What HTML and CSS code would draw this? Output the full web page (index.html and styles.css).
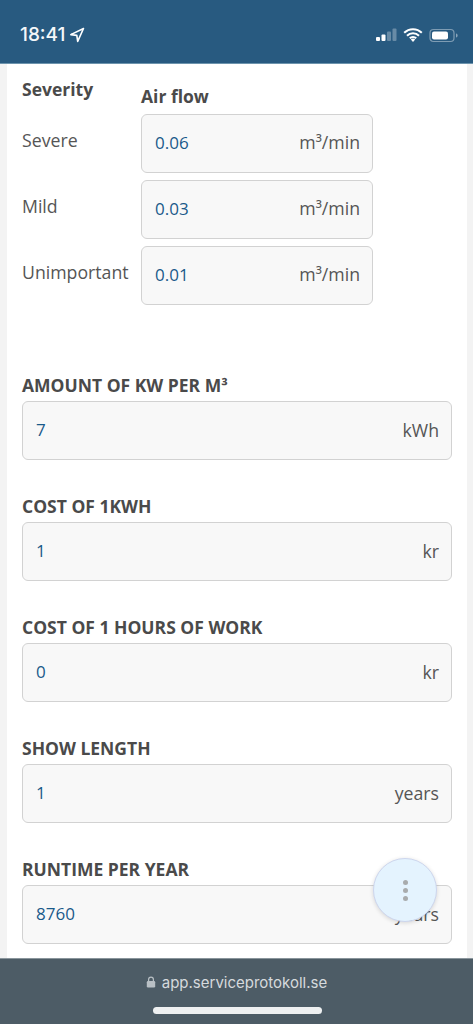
FILE: index.html
```html
<!DOCTYPE html>
<html lang="en">
<head>
<meta charset="utf-8">
<title>Service settings</title>
<link rel="stylesheet" href="styles.css">
</head>
<body>
<div class="phone">
  <header class="status">
    <div class="status-left">
      <span class="time">18:41</span>
      <svg class="loc" viewBox="0 0 16 16" width="16" height="16"><path d="M14.5 1.5 1.8 7.6l6 .8.9 6z" fill="none" stroke="#fff" stroke-width="1.6" stroke-linejoin="round"/></svg>
    </div>
    <div class="status-right">
      <svg width="21" height="14" viewBox="0 0 21 14"><rect x="0" y="9" width="4" height="4" rx="1" fill="#fff"/><rect x="5.5" y="6.5" width="4" height="6.5" rx="1" fill="#fff"/><rect x="11" y="3.5" width="4" height="9.5" rx="1" fill="#fff" opacity=".3"/><rect x="16.5" y="0.5" width="4" height="12.5" rx="1" fill="#fff" opacity=".3"/></svg>
      <svg width="20" height="14" viewBox="0 0 20 14"><path d="M1.2 4.8a12.4 12.4 0 0 1 17.6 0M4 7.7a8.4 8.4 0 0 1 12 0M6.8 10.3a4.5 4.5 0 0 1 6.4 0" fill="none" stroke="#fff" stroke-width="2"/><path d="M10 14l-2.2-2.4a3 3 0 0 1 4.4 0z" fill="#fff"/></svg>
      <svg width="30" height="15" viewBox="0 0 30 15"><rect x="1" y="1.5" width="24" height="12" rx="3.5" fill="none" stroke="#fff" stroke-opacity=".4" stroke-width="1.2"/><rect x="3" y="3.5" width="16" height="8" rx="2" fill="#fff"/><path d="M27 5.5c1.2.4 1.6 1.1 1.6 2s-.4 1.6-1.6 2z" fill="#fff" opacity=".45"/></svg>
    </div>
  </header>

  <main class="panel">
    <section class="severity">
      <div class="sev-head">Severity</div>
      <div class="air-head">Air flow</div>

      <div class="sev-label">Severe</div>
      <div class="box box-sev"><span class="val">0.06</span><span class="unit">m³/min</span></div>

      <div class="sev-label">Mild</div>
      <div class="box box-sev"><span class="val">0.03</span><span class="unit">m³/min</span></div>

      <div class="sev-label">Unimportant</div>
      <div class="box box-sev"><span class="val">0.01</span><span class="unit">m³/min</span></div>
    </section>

    <section class="fields">
      <div class="field">
        <div class="label">AMOUNT OF KW PER M³</div>
        <div class="box"><span class="val">7</span><span class="unit">kWh</span></div>
      </div>
      <div class="field">
        <div class="label">COST OF 1KWH</div>
        <div class="box"><span class="val">1</span><span class="unit">kr</span></div>
      </div>
      <div class="field">
        <div class="label">COST OF 1 HOURS OF WORK</div>
        <div class="box"><span class="val">0</span><span class="unit">kr</span></div>
      </div>
      <div class="field">
        <div class="label">SHOW LENGTH</div>
        <div class="box"><span class="val">1</span><span class="unit">years</span></div>
      </div>
      <div class="field">
        <div class="label">RUNTIME PER YEAR</div>
        <div class="box"><span class="val">8760</span><span class="unit">years</span></div>
      </div>
    </section>

    <button class="fab" aria-label="More"><i></i><i></i><i></i></button>
  </main>

  <footer class="urlbar">
    <div class="url">
      <svg width="10" height="12" viewBox="0 0 10 12"><path d="M2.6 5.5V3.6a2.4 2.4 0 0 1 4.8 0v1.9" fill="none" stroke="#b9c0c5" stroke-width="1.2"/><rect x="0.8" y="5" width="8.4" height="6.5" rx="1.2" fill="#b9c0c5"/></svg>
      <span>app.serviceprotokoll.se</span>
    </div>
    <div class="home"></div>
  </footer>
</div>
</body>
</html>
```

FILE: styles.css
```css
* { box-sizing: border-box; }
html, body { margin: 0; padding: 0; }
body { background: #f3f3f3; font-family: "Open Sans", "Liberation Sans", sans-serif; color: #4a4a4a; }
.phone { width: 473px; height: 1024px; display: flex; flex-direction: column; overflow: hidden; }

.status { height: 64px; flex: none; background: #285a80; border-bottom: 1px solid #6d94ad; display: flex; justify-content: space-between; align-items: flex-start; padding: 25px 14px 0 20px; color: #fff; }
.status-left { display: flex; align-items: center; gap: 4px; }
.time { font-family: "Inter", "Liberation Sans", sans-serif; font-size: 19px; line-height: 20px; font-weight: 500; color: #f4f7f9; }
.status-right { display: flex; align-items: center; gap: 6px; height: 20px; }

.panel { position: relative; flex: 1; margin: 0 6px 0 7px; background: #fff; padding: 0 15px; min-height: 0; overflow: hidden; }

.severity { display: grid; grid-template-columns: 119px 232px; grid-template-rows: 43px 59px 59px 59px; row-gap: 7px; }
.sev-head { font-size: 17.5px; font-weight: 700; line-height: 22px; padding-top: 14px; }
.air-head { font-size: 17.5px; font-weight: 700; line-height: 22px; padding-top: 21px; }
.sev-label { font-size: 17.7px; line-height: 22px; color: #555; padding-top: 15px; }

.box { height: 59px; background: #f8f8f8; border: 1.5px solid #d2d2d2; border-radius: 6px; display: flex; justify-content: space-between; align-items: center; padding: 0 12px 0 13px; }
.val { font-size: 17px; line-height: 22px; color: #1a5a8a; position: relative; top: -1px; }
.unit { font-size: 17.7px; line-height: 22px; color: #555; position: relative; top: -1px; }
.box-sev .val { top: -1px; }
.box-sev .unit { top: -2px; }

.fields { margin-top: 66px; display: flex; flex-direction: column; gap: 32px; }
.field { width: 430px; }
.label { font-size: 17.5px; font-weight: 700; line-height: 22px; height: 30px; color: #4a4a4a; padding-top: 3px; }

.fab { position: absolute; left: 366px; top: 794px; width: 64px; height: 64px; border-radius: 50%; background: #e4f3fe; border: 1px solid #cdd6ee; box-shadow: 0 1px 4px rgba(0,0,0,.14); padding: 0; display: flex; flex-direction: column; align-items: center; justify-content: center; gap: 3px; }
.fab i { display: block; width: 5px; height: 5px; border-radius: 50%; background: #a8abad; }

.urlbar { height: 66px; flex: none; background: #4d5c66; border-top: 1px solid #8a959c; display: flex; flex-direction: column; align-items: center; }
.url { display: flex; align-items: center; gap: 6px; margin-top: 13px; height: 20px; color: #d6dadd; font-family: "Inter", "Liberation Sans", sans-serif; font-size: 15px; }
.home { width: 169px; height: 7px; border-radius: 4px; background: #eef0f1; margin: 15px 0 0 1px; }
```
